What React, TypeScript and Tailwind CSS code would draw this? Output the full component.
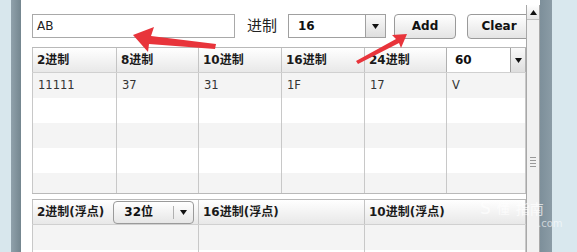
import React from "react";

const font = { fontFamily: '"DejaVu Sans", "Noto Sans CJK SC", sans-serif' };

function Tri({ up = false }: { up?: boolean }) {
  return (
    <svg width="7" height="5" viewBox="0 0 7 5">
      {up ? <polygon points="0,5 7,5 3.5,0" fill="#111" /> : <polygon points="0,0 7,0 3.5,5" fill="#111" />}
    </svg>
  );
}

const cols = ["2进制", "8进制", "10进制", "16进制", "24进制"];
const vals = ["11111", "37", "31", "1F", "17", "V"];
const rowBg = ["bg-[#f4f4f4]", "bg-white", "bg-[#f4f4f4]", "bg-white", "bg-[#f4f4f4]"];
const rowH = ["h-[25px]", "h-[25px]", "h-[25px]", "h-[25px]", "h-[20px]"];

export default function App() {
  return (
    <div className="relative w-[577px] h-[252px] flex overflow-hidden bg-[#dbe9ee]" style={font}>
      <div className="w-[11px] h-full bg-[#d8e7ed]" />
      <div className="w-[10px] h-full bg-linear-to-r from-[#90a1ab] to-[#74868f]" />
      <div className="w-[505px] h-full bg-white overflow-hidden pl-[11px] pt-[14px]">
        {/* top controls */}
        <div className="flex items-center h-[24px] w-[540px]">
          <div className="w-[203px] h-[24px] border border-[#a9a9a9] bg-white flex items-center pl-[4px] text-[12px] text-[#222]">
            AB
          </div>
          <div className="ml-[12px] text-[15px] text-[#222] leading-none">进制</div>
          <div className="ml-[11px] w-[98px] h-[24px] border border-[#a0a0a0] flex bg-white">
            <div className="flex-1 flex items-center pl-[9px] text-[12px] font-bold text-[#111]">16</div>
            <div className="w-[20px] h-full border-l border-[#a0a0a0] bg-linear-to-b from-[#fafafa] to-[#dedede] flex items-center justify-center">
              <Tri />
            </div>
          </div>
          <div className="ml-[8px] w-[62px] h-[25px] rounded-[4px] border border-[#9a9a9a] bg-linear-to-b from-white to-[#e4e4e4] flex items-center justify-center text-[12px] font-bold text-[#111]">
            Add
          </div>
          <div className="ml-[11px] w-[64px] h-[25px] rounded-[4px] border border-[#9a9a9a] bg-linear-to-b from-white to-[#e4e4e4] flex items-center justify-center text-[12px] font-bold text-[#111]">
            Clear
          </div>
        </div>

        {/* main table */}
        <div className="mt-[9px] w-[494px] border-t border-b border-[#b9b9b9]">
          <div className="grid grid-cols-[84px_82px_83px_83px_82px_80px] h-[25px] border-b border-[#d0d0d0] bg-linear-to-b from-white to-[#e8e8e8]">
            {cols.map((c) => (
              <div key={c} className="border-l border-[#c4c4c4] flex items-center pl-[4px] text-[12px] font-bold text-[#1a1a1a]">
                {c}
              </div>
            ))}
            <div className="border-l border-r border-[#b0b0b0] flex bg-white">
              <div className="flex-1 flex items-center pl-[8px] text-[12px] font-bold text-[#111]">60</div>
              <div className="w-[15px] h-full border-l border-[#a0a0a0] bg-linear-to-b from-[#fafafa] to-[#dedede] flex items-center justify-center">
                <Tri />
              </div>
            </div>
          </div>
          {rowBg.map((bg, r) => (
            <div key={r} className={`grid grid-cols-[84px_82px_83px_83px_82px_80px] ${rowH[r]} ${bg}`}>
              {vals.map((v, i) => (
                <div
                  key={i}
                  className={`border-l border-[#c8c8c8] ${i === 5 ? "border-r" : ""} flex items-center pl-[5px] text-[11.5px] text-[#333]`}
                >
                  {r === 0 ? v : ""}
                </div>
              ))}
            </div>
          ))}
        </div>

        {/* float table */}
        <div className="mt-[5px] w-[494px] border-t border-[#b9b9b9]">
          <div className="grid grid-cols-[166px_166px_162px] h-[25px] border-b border-[#d0d0d0] bg-linear-to-b from-white to-[#e8e8e8]">
            <div className="border-l border-[#c4c4c4] flex items-center pl-[4px] text-[12px] font-bold text-[#1a1a1a]">
              <span>2进制(浮点)</span>
              <div className="ml-[9px] w-[81px] h-[23px] rounded-[4px] border border-[#9a9a9a] bg-linear-to-b from-white to-[#e6e6e6] flex">
                <div className="flex-1 flex items-center pl-[10px] text-[12px] font-bold text-[#111]">32位</div>
                <div className="w-[20px] my-[4px] border-l border-[#b0b0b0] flex items-center justify-center">
                  <Tri />
                </div>
              </div>
            </div>
            <div className="border-l border-[#c4c4c4] flex items-center pl-[4px] text-[12px] font-bold text-[#1a1a1a]">16进制(浮点)</div>
            <div className="border-l border-r border-[#c4c4c4] flex items-center pl-[4px] text-[12px] font-bold text-[#1a1a1a]">10进制(浮点)</div>
          </div>
          <div className="grid grid-cols-[166px_166px_162px] h-[25px] bg-[#f4f4f4]">
            <div className="border-l border-[#c8c8c8]" />
            <div className="border-l border-[#c8c8c8]" />
            <div className="border-l border-r border-[#c8c8c8]" />
          </div>
          <div className="grid grid-cols-[166px_166px_162px] h-[25px] bg-white">
            <div className="border-l border-[#c8c8c8]" />
            <div className="border-l border-[#c8c8c8]" />
            <div className="border-l border-r border-[#c8c8c8]" />
          </div>
        </div>
      </div>

      {/* scrollbar */}
      <div className="w-[14px] h-full bg-white">
        <div className="mt-[5px] h-[247px] border-l border-r border-[#a8a8a8] bg-[#f1f1f1] flex flex-col items-center">
          <div className="w-full h-[15px] border-b border-[#c0c0c0] bg-linear-to-b from-white to-[#e6e6e6] flex items-center justify-center">
            <Tri up />
          </div>
          <div className="mt-[137px] flex flex-col gap-[2px]">
            <div className="w-[6px] h-px bg-[#999]" />
            <div className="w-[6px] h-px bg-[#999]" />
            <div className="w-[6px] h-px bg-[#999]" />
            <div className="w-[6px] h-px bg-[#999]" />
          </div>
        </div>
      </div>
      <div className="w-[12px] h-full bg-linear-to-r from-[#7d8f9a] to-[#8b9ca6]" />
      <div className="flex-1 h-full bg-[#d9e8ee]" />

      {/* watermark */}
      <div className="absolute left-[480px] top-[200px] flex items-center gap-[6px] text-white/70 leading-none pointer-events-none">
        <span className="text-[17px]">S</span>
        <span className="text-[13px]">懂</span>
        <span className="text-[14px]">指南</span>
      </div>
      <div className="absolute left-[538px] top-[219px] text-[10px] text-white/60 leading-none pointer-events-none">.com</div>

      {/* red arrows */}
      <svg className="absolute left-0 top-0 pointer-events-none" width="577" height="252">
        <polygon points="133,35 154,27 151,36 216,44 215,49 149,44 148,52" fill="#e8343b" />
        <polygon points="407,34 392,35 396,39 356,61 358,64 399,43 401,48" fill="#e8343b" />
      </svg>
    </div>
  );
}
